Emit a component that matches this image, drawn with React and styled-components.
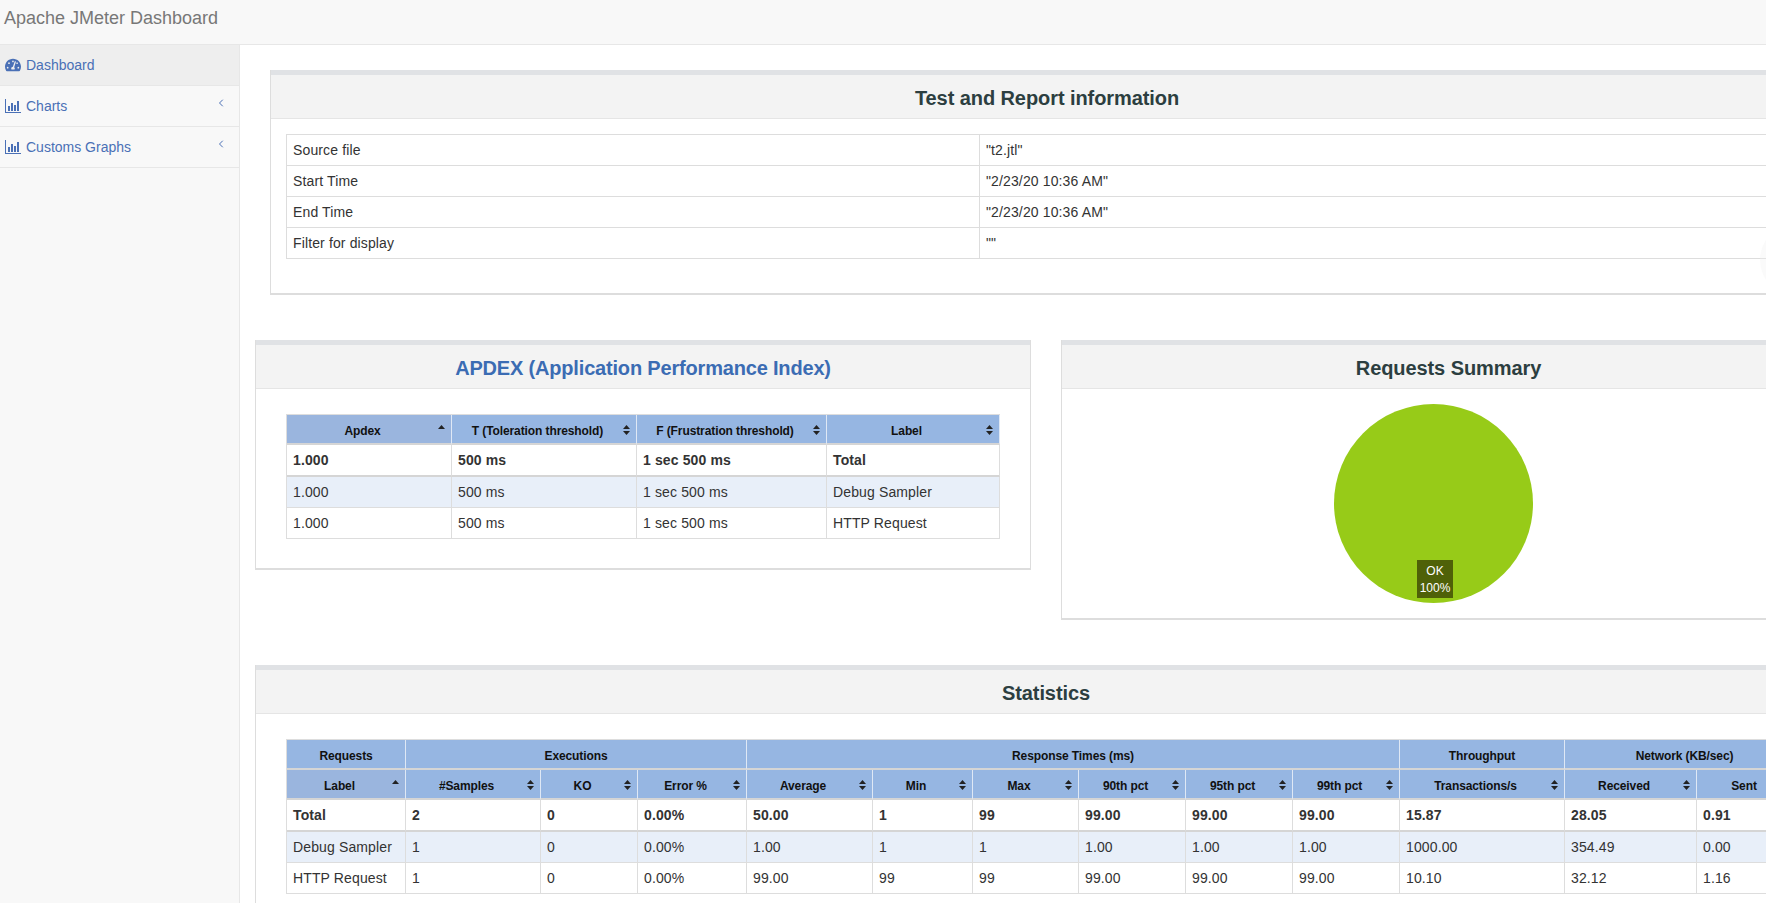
import React from "react";
import styled, { createGlobalStyle } from "styled-components";
import { FaTachometerAlt } from "react-icons/fa";
import { ChevronLeft } from "lucide-react";

const GlobalStyle = createGlobalStyle`
  html, body {
    margin: 0;
    padding: 0;
    height: 100%;
    overflow: hidden;
    background: #fff;
    font-family: "Liberation Sans", Arial, sans-serif;
    font-size: 14px;
    color: #333;
  }
  * {
    box-sizing: border-box;
  }
`;

const Page = styled.div`
  position: relative;
  width: 1766px;
  height: 903px;
  overflow: hidden;
  display: flex;
  flex-direction: column;
`;

const Navbar = styled.header`
  flex: 0 0 45px;
  display: flex;
  align-items: center;
  padding: 0 4px 7px;
  background: #f8f8f8;
  border-bottom: 1px solid #e7e7e7;
  font-size: 18px;
  color: #777;
`;

const Body = styled.div`
  flex: 1;
  display: flex;
  min-height: 0;
`;

const Sidebar = styled.nav`
  flex: 0 0 240px;
  background: #f8f8f8;
  border-right: 1px solid #e7e7e7;
`;

const NavItem = styled.div`
  height: 41px;
  display: flex;
  align-items: center;
  gap: 5px;
  padding: 0 12px 1px 5px;
  border-bottom: 1px solid #e7e7e7;
  background: ${(props) => (props.$active ? "#eeeeee" : "transparent")};
  color: #4a70b6;
  svg {
    flex: none;
  }
  span {
    flex: 1;
  }
`;

const Caret = styled(ChevronLeft)`
  margin-top: -5px;
`;

const Content = styled.main`
  flex: 1;
  min-width: 0;
  overflow: hidden;
  padding: 25px 0 0 15px;
  display: flex;
  flex-direction: column;
  gap: 45px;
`;

const Panel = styled.section`
  flex: none;
  width: ${(props) => props.$width}px;
  margin-left: ${(props) => props.$indent || 0}px;
  background: #fff;
  border: 1px solid #ddd;
  border-top: 0;
  border-bottom-width: 2px;
`;

const PanelHead = styled.div`
  height: 49px;
  display: flex;
  align-items: center;
  justify-content: center;
  padding-top: 3px;
  background: #f3f3f3;
  border-top: 5px solid #e0e2e5;
  border-bottom: 1px solid #e5e5e5;
  font-size: 20px;
  font-weight: bold;
  letter-spacing: ${(props) => (props.$link ? "-0.18px" : "-0.08px")};
  color: ${(props) => (props.$link ? "#3b6cb3" : "#2c3e40")};
`;

const PanelBody = styled.div`
  padding: ${(props) => props.$top}px 15px ${(props) => props.$bottom}px ${(props) => props.$left}px;
`;

const PanelRow = styled.div`
  display: grid;
  grid-template-columns: 776px 775px;
  gap: 30px;
  align-items: start;
  flex: none;
`;

const Table = styled.table`
  table-layout: fixed;
  border-collapse: separate;
  border-spacing: 0;
  width: ${(props) => props.$width}px;
  border-top: 1px solid #ddd;
  border-left: 1px solid #ddd;
`;

const Th = styled.th`
  position: relative;
  height: 30px;
  padding: ${(props) => (props.$group ? "3px 0 0" : "3px 18px 0 5px")};
  background: ${(props) => (props.$sorted ? "#9ab5de" : "#96b6e2")};
  border-right: 1px solid #dfe8f5;
  border-bottom: 2px solid #d5d5d5;
  font-size: 12px;
  font-weight: bold;
  letter-spacing: -0.1px;
  color: #111;
  text-align: center;
`;

const Td = styled.td`
  height: ${(props) => (props.$total ? 32 : 31)}px;
  padding: 0 5px 1px 6px;
  background: ${(props) => (props.$zebra ? "#e8eff9" : "#fff")};
  border-right: 1px solid #ddd;
  border-bottom: ${(props) => (props.$total ? "2px solid #d5d5d5" : "1px solid #ddd")};
  font-weight: ${(props) => (props.$total ? "bold" : "normal")};
  letter-spacing: 0.13px;
  white-space: nowrap;
  overflow: hidden;
`;

const SortMark = styled.svg`
  position: absolute;
  right: 6px;
  top: 10px;
  width: 7px;
  height: 10px;
`;

const PieWrap = styled.div`
  position: relative;
  width: 199px;
  height: 199px;
  margin: 15px auto;
  left: -15px;
`;

const PieLabel = styled.div`
  position: absolute;
  left: 83px;
  top: 156px;
  width: 36px;
  height: 38px;
  padding-top: 3px;
  background: #4f6108;
  color: #fff;
  font-size: 12px;
  line-height: 17px;
  text-align: center;
`;

const EdgeGlow = styled.div`
  position: absolute;
  left: 1760px;
  top: 224px;
  width: 72px;
  height: 72px;
  border-radius: 50%;
  background: rgba(240, 240, 240, 0.3);
`;

function BarsIcon() {
  return (
    <svg width="16" height="14" viewBox="0 0 16 14" fill="#4a70b6">
      <rect x="0" y="0" width="1" height="14" />
      <rect x="0" y="13" width="16" height="1" />
      <rect x="3" y="7" width="2" height="5" />
      <rect x="6" y="4" width="2" height="8" />
      <rect x="9" y="6" width="2" height="6" />
      <rect x="12" y="2" width="2" height="10" />
    </svg>
  );
}

function Sort({ sorted }) {
  return (
    <SortMark viewBox="0 0 7 10" fill="#222">
      <polygon points="3.5,0 7,4 0,4" />
      {!sorted && <polygon points="0,6 7,6 3.5,10" />}
    </SortMark>
  );
}

function SortHead({ children, sorted }) {
  return (
    <Th $sorted={sorted}>
      {children}
      <Sort sorted={sorted} />
    </Th>
  );
}

function Columns({ widths }) {
  return (
    <colgroup>
      {widths.map((w, i) => (
        <col key={i} style={{ width: w }} />
      ))}
    </colgroup>
  );
}

const infoRows = [
  ["Source file", '"t2.jtl"'],
  ["Start Time", '"2/23/20 10:36 AM"'],
  ["End Time", '"2/23/20 10:36 AM"'],
  ["Filter for display", '""'],
];

const apdexHeads = ["Apdex", "T (Toleration threshold)", "F (Frustration threshold)", "Label"];
const apdexRows = [
  ["1.000", "500 ms", "1 sec 500 ms", "Total"],
  ["1.000", "500 ms", "1 sec 500 ms", "Debug Sampler"],
  ["1.000", "500 ms", "1 sec 500 ms", "HTTP Request"],
];

const statGroups = [
  ["Requests", 1],
  ["Executions", 3],
  ["Response Times (ms)", 6],
  ["Throughput", 1],
  ["Network (KB/sec)", 2],
];
const statHeads = [
  "Label",
  "#Samples",
  "KO",
  "Error %",
  "Average",
  "Min",
  "Max",
  "90th pct",
  "95th pct",
  "99th pct",
  "Transactions/s",
  "Received",
  "Sent",
];
const statRows = [
  ["Total", "2", "0", "0.00%", "50.00", "1", "99", "99.00", "99.00", "99.00", "15.87", "28.05", "0.91"],
  ["Debug Sampler", "1", "0", "0.00%", "1.00", "1", "1", "1.00", "1.00", "1.00", "1000.00", "354.49", "0.00"],
  ["HTTP Request", "1", "0", "0.00%", "99.00", "99", "99", "99.00", "99.00", "99.00", "10.10", "32.12", "1.16"],
];

function DataRows({ rows }) {
  return (
    <tbody>
      {rows.map((row, r) => (
        <tr key={r}>
          {row.map((cell, c) => (
            <Td key={c} $total={r === 0} $zebra={r === 1}>
              {cell}
            </Td>
          ))}
        </tr>
      ))}
    </tbody>
  );
}

export default function App() {
  return (
    <Page>
      <GlobalStyle />
      <Navbar>Apache JMeter Dashboard</Navbar>
      <Body>
        <Sidebar>
          <NavItem $active>
            <FaTachometerAlt size={16} />
            <span>Dashboard</span>
          </NavItem>
          <NavItem>
            <BarsIcon />
            <span>Charts</span>
            <Caret size={12} strokeWidth={2} />
          </NavItem>
          <NavItem>
            <BarsIcon />
            <span>Customs Graphs</span>
            <Caret size={12} strokeWidth={2} />
          </NavItem>
        </Sidebar>
        <Content>
          <Panel $width={1554} $indent={15}>
            <PanelHead>Test and Report information</PanelHead>
            <PanelBody $top={15} $bottom={34} $left={15}>
              <Table $width={1522}>
                <Columns widths={[693, 828]} />
                <tbody>
                  {infoRows.map((row) => (
                    <tr key={row[0]}>
                      <Td>{row[0]}</Td>
                      <Td>{row[1]}</Td>
                    </tr>
                  ))}
                </tbody>
              </Table>
            </PanelBody>
          </Panel>
          <PanelRow>
            <Panel $width={776}>
              <PanelHead $link>APDEX (Application Performance Index)</PanelHead>
              <PanelBody $top={25} $bottom={29} $left={30}>
                <Table $width={714}>
                  <Columns widths={[165, 185, 190, 173]} />
                  <thead>
                    <tr>
                      {apdexHeads.map((h, i) => (
                        <SortHead key={h} sorted={i === 0}>
                          {h}
                        </SortHead>
                      ))}
                    </tr>
                  </thead>
                  <DataRows rows={apdexRows} />
                </Table>
              </PanelBody>
            </Panel>
            <Panel $width={775}>
              <PanelHead>Requests Summary</PanelHead>
              <PieWrap>
                <svg width="199" height="199" viewBox="0 0 199 199">
                  <circle cx="99.5" cy="99.5" r="99.5" fill="#97cb18" />
                </svg>
                <PieLabel>
                  OK
                  <br />
                  100%
                </PieLabel>
              </PieWrap>
            </Panel>
          </PanelRow>
          <Panel $width={1582}>
            <PanelHead>Statistics</PanelHead>
            <PanelBody $top={25} $bottom={29} $left={30}>
              <Table $width={1519}>
                <Columns widths={[119, 135, 97, 109, 126, 100, 106, 107, 107, 107, 165, 132, 108]} />
                <thead>
                  <tr>
                    {statGroups.map(([name, span]) => (
                      <Th key={name} $group colSpan={span}>
                        {name}
                      </Th>
                    ))}
                  </tr>
                  <tr>
                    {statHeads.map((h, i) => (
                      <SortHead key={h} sorted={i === 0}>
                        {h}
                      </SortHead>
                    ))}
                  </tr>
                </thead>
                <DataRows rows={statRows} />
              </Table>
            </PanelBody>
          </Panel>
        </Content>
      </Body>
      <EdgeGlow />
    </Page>
  );
}
